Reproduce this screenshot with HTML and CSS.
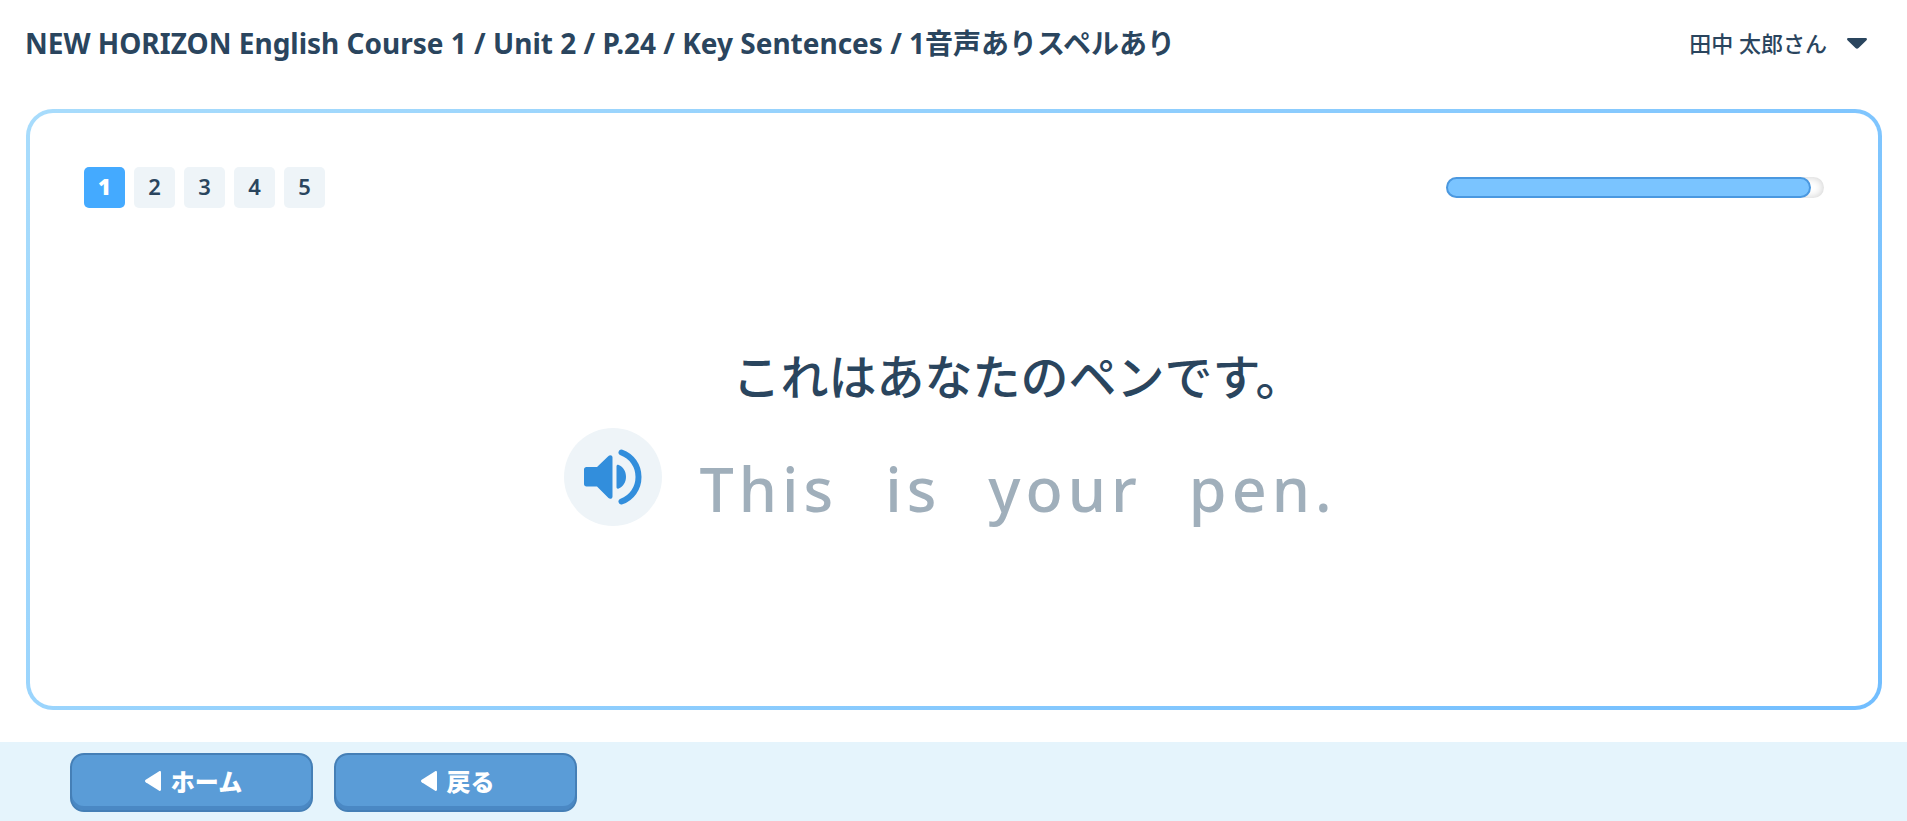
FILE: index.html
```
<!DOCTYPE html>
<html lang="ja">
<head>
    <meta charset="UTF-8">
    <meta name="viewport" content="width=device-width, initial-scale=1.0">
    <title>Key Sentences</title>
    <link rel="stylesheet" href="styles.css">
</head>
<body>
    <header class="header">
        <h1 class="title">NEW HORIZON English Course 1 / Unit 2 / P.24 / Key Sentences / 1音声ありスペルあり</h1>
        <button type="button" class="user-menu">
            <span>田中 太郎さん</span>
            <svg class="caret" viewBox="0 0 20 11" aria-hidden="true">
                <path d="M1.5 0h17c1.3 0 1.9 1.3 1 2.2l-8 7.9c-.9.9-2.1.9-3 0l-8-7.9C-.4 1.3.2 0 1.5 0z"/>
            </svg>
        </button>
    </header>

    <main class="card">
        <div class="card-top">
            <!-- Question numbers -->
            <nav class="pager">
                <button type="button" class="page active">1</button>
                <button type="button" class="page">2</button>
                <button type="button" class="page">3</button>
                <button type="button" class="page">4</button>
                <button type="button" class="page">5</button>
            </nav>
            <!-- Time left -->
            <div class="timer">
                <div class="timer-bar" style="width: 96.5%"></div>
            </div>
        </div>

        <!-- Question -->
        <div class="question">
            <button type="button" class="sound" aria-label="音声">
                <svg viewBox="0 0 58 56" aria-hidden="true">
                    <path d="M2.500 18H13L24.500 7c1.500-1.500 4-.8 4 1.500v39c0 2.300-2.500 3-4 1.500L13 37.500H2.500C1 37.500 0 36.500 0 35V20.500C0 19 1 18 2.500 18z"/>
                    <path d="M32.500 17.500c0-1.500 1-2 2.200-1.500 4.300 1.700 7.300 6.300 7.300 11.800s-3 10-7.300 11.700c-1.200.5-2.200 0-2.200-1.500z"/>
                    <path class="wave" d="M37.500 3.500c10 3.500 17 13 17 24.500s-7 21-17 24.500"/>
                </svg>
            </button>
            <div class="sentence">
                <p class="japanese">これはあなたのペンです。</p>
                <p class="english"><span>This</span> <span>is</span> <span>your</span> <span>pen.</span></p>
            </div>
        </div>
    </main>

    <footer class="footer">
        <button type="button" class="btn">
            <svg class="arrow" viewBox="0 0 16 20" aria-hidden="true"><path d="M14.2.3c.8-.5 1.8 0 1.8 1v17.400c0 1-1 1.500-1.800 1L.7 11.200c-.9-.6-.9-1.800 0-2.400z"/></svg>
            ホーム
        </button>
        <button type="button" class="btn">
            <svg class="arrow" viewBox="0 0 16 20" aria-hidden="true"><path d="M14.2.3c.8-.5 1.8 0 1.8 1v17.400c0 1-1 1.500-1.800 1L.7 11.200c-.9-.6-.9-1.800 0-2.400z"/></svg>
            戻る
        </button>
    </footer>
</body>
</html>
```
FILE: styles.css
```
* {
    box-sizing: border-box;
}
body {
    display: flex;
    flex-direction: column;
    min-height: 100vh;
    margin: 0;
    background-color: #fff;
    color: #2a455e;
    font-family: "Noto Sans", "Noto Sans CJK JP", sans-serif;
}
button {
    padding: 0;
    border: none;
    background: none;
    color: inherit;
    font-family: inherit;
    cursor: pointer;
}
.header {
    display: flex;
    justify-content: space-between;
    align-items: center;
    height: 86px;
    padding: 0 40px 0 25px;
}
.title {
    margin: 0;
    font-size: 28px;
    font-weight: bold;
    line-height: 40px;
}
.user-menu {
    display: flex;
    align-items: center;
    gap: 20px;
    font-size: 22px;
    font-weight: 500;
    line-height: 32px;
    white-space: nowrap;
}
.caret {
    width: 20px;
    height: 11px;
    fill: #2a455e;
}
.card {
    display: flex;
    flex: 1;
    flex-direction: column;
    margin: 23px 25px 32px 26px;
    padding: 54px;
    border: 4px solid transparent;
    border-radius: 27px;
    background: linear-gradient(#fff, #fff) padding-box, linear-gradient(135deg, #a8dcfc, #72beff) border-box;
}
.card-top {
    display: flex;
    justify-content: space-between;
    align-items: center;
}
.pager {
    display: flex;
    gap: 9px;
}
.page {
    width: 41px;
    height: 41px;
    padding-bottom: 4px;
    border-radius: 5px;
    background-color: #eef4f8;
    font-size: 22px;
    font-weight: 600;
}
.page.active {
    background-color: #44aaff;
    color: #fff;
    font-weight: 900;
}
.timer {
    width: 378px;
    height: 21px;
    border-radius: 11px;
    box-shadow: inset 0 0 8px rgba(0, 0, 0, 0.2);
}
.timer-bar {
    height: 100%;
    border: 2px solid #4a98e0;
    border-radius: 11px;
    background-color: #7ac4ff;
}
.question {
    display: flex;
    justify-content: center;
    align-items: center;
    gap: 30px;
    margin-top: 135px;
}
.sound {
    display: flex;
    justify-content: center;
    align-items: center;
    width: 98px;
    height: 98px;
    margin-top: 76px;
    border-radius: 50%;
    background-color: #eef4f8;
}
.sound svg {
    width: 58px;
    height: 56px;
    fill: #328edc;
}
.sound .wave {
    fill: none;
    stroke: #328edc;
    stroke-width: 6;
    stroke-linecap: round;
}
.sentence {
    padding: 0 8px;
    text-align: center;
}
.japanese {
    margin: 0 0 33px;
    font-size: 48px;
    font-weight: 500;
    line-height: 68px;
}
.english {
    display: flex;
    justify-content: center;
    gap: 47px;
    margin: 0;
    color: #a0afbb;
    font-size: 61px;
    font-weight: 500;
    letter-spacing: 5px;
    line-height: 90px;
}
.footer {
    display: flex;
    align-items: center;
    gap: 21px;
    height: 79px;
    padding: 2px 70px 0;
    background-color: #e5f4fc;
}
.btn {
    display: flex;
    justify-content: center;
    align-items: center;
    gap: 10px;
    width: 243px;
    height: 59px;
    padding: 0 0 4px 4px;
    border: 2px solid #457fb6;
    border-radius: 14px;
    background-color: #5a9cd7;
    box-shadow: inset 0 -4px 0 #4a88c4;
    color: #fff;
    font-size: 24px;
    font-weight: 900;
}
.arrow {
    width: 16px;
    height: 20px;
    fill: #fff;
}
```
